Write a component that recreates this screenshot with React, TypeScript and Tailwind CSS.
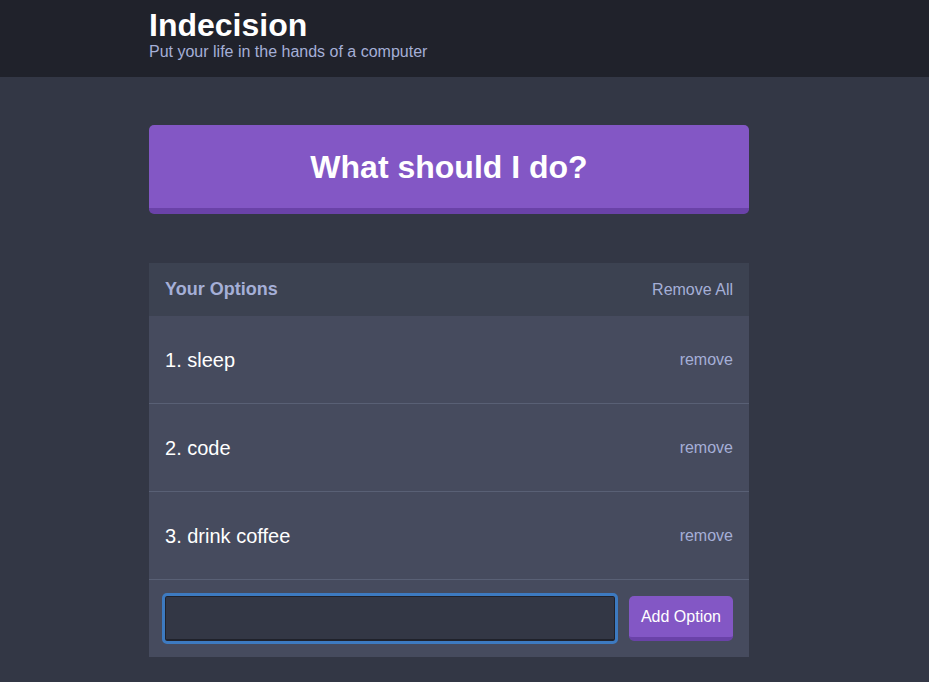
import React, { useState } from "react";

const App: React.FC = () => {
  const [options, setOptions] = useState<string[]>(["sleep", "code", "drink coffee"]);
  const [text, setText] = useState("");

  const addOption = (e: React.FormEvent) => {
    e.preventDefault();
    const value = text.trim();
    if (!value) return;
    setOptions([...options, value]);
    setText("");
  };

  return (
    <div className="min-h-[682px] bg-[#333745] font-['Liberation_Sans',Arial,sans-serif]">
      <header className="bg-[#20222b] h-[77px]">
        <div className="ml-[149px] w-[600px] pt-[6px]">
          <h1 className="text-[32px] font-bold text-white leading-[38px]">Indecision</h1>
          <p className="text-[16px] text-[#a5afd7] leading-[18px] -mt-[1px]">
            Put your life in the hands of a computer
          </p>
        </div>
      </header>

      <main className="ml-[149px] w-[600px] pt-[48px] pb-6">
        <button
          type="button"
          className="w-full h-[89px] bg-[#8357c5] border-b-[6px] border-[#6a42a8] rounded-[5px] text-white text-[32px] font-bold"
        >
          What should I do?
        </button>

        <div className="mt-[49px] bg-[#464b5e]">
          <div className="h-[53px] bg-[#3c4251] flex items-center justify-between px-4">
            <h3 className="text-[18px] font-bold text-[#a5afd7]">Your Options</h3>
            <button type="button" className="text-[16px] text-[#a5afd7]" onClick={() => setOptions([])}>
              Remove All
            </button>
          </div>

          {options.map((option, index) => (
            <div
              key={option + index}
              className="h-[88px] flex items-center justify-between px-4 border-b border-[#596075]"
            >
              <p className="text-[20px] text-white">
                {index + 1}. {option}
              </p>
              <button
                type="button"
                className="text-[16px] text-[#a5afd7]"
                onClick={() => setOptions(options.filter((_, i) => i !== index))}
              >
                remove
              </button>
            </div>
          ))}

          <form onSubmit={addOption} className="flex items-center gap-[14px] px-4 pt-[16px] pb-[16px]">
            <input
              autoFocus
              value={text}
              onChange={(e) => setText(e.target.value)}
              className="flex-1 h-[45px] bg-[#333745] border border-b-2 border-[#20222b] rounded-[2px] outline-[3px] outline-solid outline-[#3d7ac0] text-white px-3 text-[18px] caret-[#a5afd7]"
            />
            <button
              type="submit"
              className="h-[45px] px-[12px] bg-[#8357c5] border-b-[4px] border-[#6a42a8] rounded-[5px] text-white text-[16px]"
            >
              Add Option
            </button>
          </form>
        </div>
      </main>
    </div>
  );
};

export default App;
